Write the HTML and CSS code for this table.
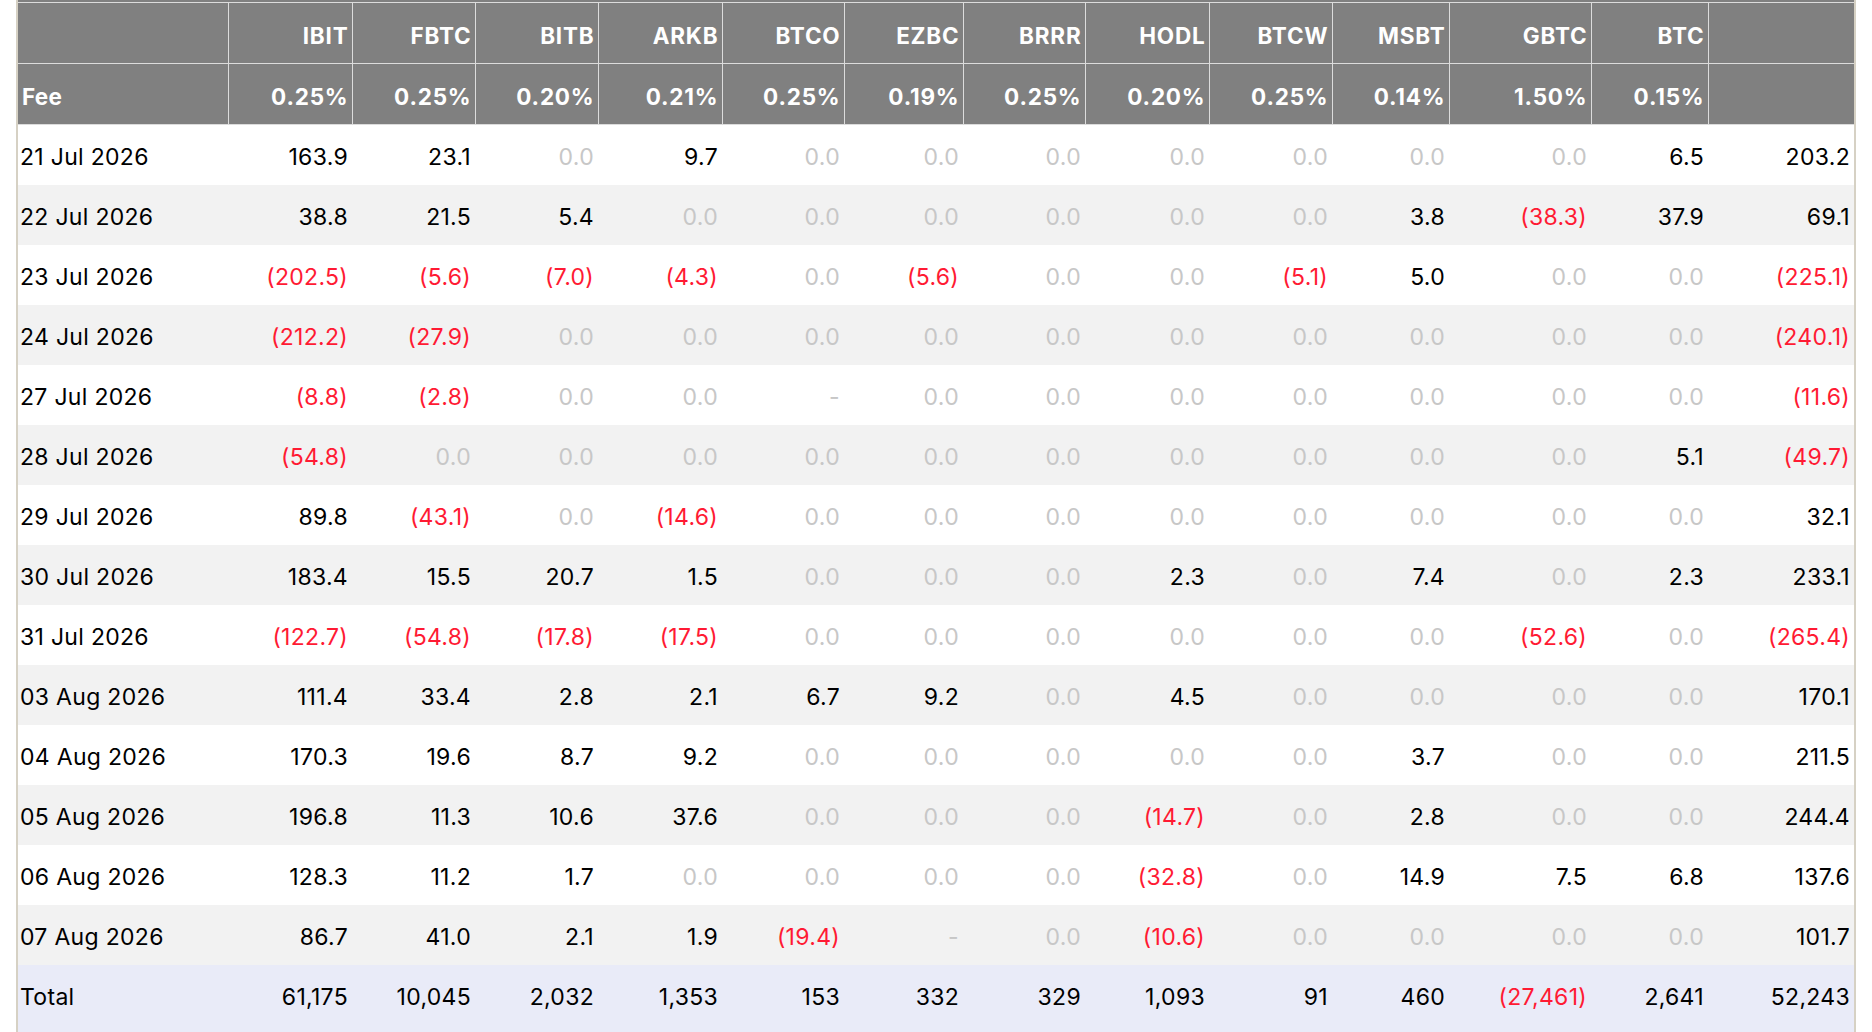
FILE: index.html
```html
<!DOCTYPE html>
<html lang="en">
<head>
<meta charset="utf-8">
<title>Bitcoin ETF Flows</title>
<link rel="stylesheet" href="styles.css">
</head>
<body>
<div class="frame">
  <div class="strip"></div>
  <table class="flows">
    <colgroup>
      <col class="c-date"><col class="c-ibit"><col class="c-fbtc"><col class="c-bitb"><col class="c-arkb"><col class="c-btco"><col class="c-ezbc"><col class="c-brrr"><col class="c-hodl"><col class="c-btcw"><col class="c-msbt"><col class="c-gbtc"><col class="c-btc"><col class="c-total">
    </colgroup>
    <thead>
      <tr>
        <th class="lbl"></th><th>IBIT</th><th>FBTC</th><th>BITB</th><th>ARKB</th><th>BTCO</th><th>EZBC</th><th>BRRR</th><th>HODL</th><th>BTCW</th><th>MSBT</th><th>GBTC</th><th>BTC</th><th class="last"></th>
      </tr>
      <tr>
        <th class="lbl">Fee</th><th>0.25%</th><th>0.25%</th><th>0.20%</th><th>0.21%</th><th>0.25%</th><th>0.19%</th><th>0.25%</th><th>0.20%</th><th>0.25%</th><th>0.14%</th><th>1.50%</th><th>0.15%</th><th class="last"></th>
      </tr>
    </thead>
    <tbody>
      <tr><td class="d">21 Jul 2026</td><td>163.9</td><td>23.1</td><td class="z">0.0</td><td>9.7</td><td class="z">0.0</td><td class="z">0.0</td><td class="z">0.0</td><td class="z">0.0</td><td class="z">0.0</td><td class="z">0.0</td><td class="z">0.0</td><td>6.5</td><td>203.2</td></tr>
      <tr><td class="d">22 Jul 2026</td><td>38.8</td><td>21.5</td><td>5.4</td><td class="z">0.0</td><td class="z">0.0</td><td class="z">0.0</td><td class="z">0.0</td><td class="z">0.0</td><td class="z">0.0</td><td>3.8</td><td class="n">(38.3)</td><td>37.9</td><td>69.1</td></tr>
      <tr><td class="d">23 Jul 2026</td><td class="n">(202.5)</td><td class="n">(5.6)</td><td class="n">(7.0)</td><td class="n">(4.3)</td><td class="z">0.0</td><td class="n">(5.6)</td><td class="z">0.0</td><td class="z">0.0</td><td class="n">(5.1)</td><td>5.0</td><td class="z">0.0</td><td class="z">0.0</td><td class="n">(225.1)</td></tr>
      <tr><td class="d">24 Jul 2026</td><td class="n">(212.2)</td><td class="n">(27.9)</td><td class="z">0.0</td><td class="z">0.0</td><td class="z">0.0</td><td class="z">0.0</td><td class="z">0.0</td><td class="z">0.0</td><td class="z">0.0</td><td class="z">0.0</td><td class="z">0.0</td><td class="z">0.0</td><td class="n">(240.1)</td></tr>
      <tr><td class="d">27 Jul 2026</td><td class="n">(8.8)</td><td class="n">(2.8)</td><td class="z">0.0</td><td class="z">0.0</td><td class="z">-</td><td class="z">0.0</td><td class="z">0.0</td><td class="z">0.0</td><td class="z">0.0</td><td class="z">0.0</td><td class="z">0.0</td><td class="z">0.0</td><td class="n">(11.6)</td></tr>
      <tr><td class="d">28 Jul 2026</td><td class="n">(54.8)</td><td class="z">0.0</td><td class="z">0.0</td><td class="z">0.0</td><td class="z">0.0</td><td class="z">0.0</td><td class="z">0.0</td><td class="z">0.0</td><td class="z">0.0</td><td class="z">0.0</td><td class="z">0.0</td><td>5.1</td><td class="n">(49.7)</td></tr>
      <tr><td class="d">29 Jul 2026</td><td>89.8</td><td class="n">(43.1)</td><td class="z">0.0</td><td class="n">(14.6)</td><td class="z">0.0</td><td class="z">0.0</td><td class="z">0.0</td><td class="z">0.0</td><td class="z">0.0</td><td class="z">0.0</td><td class="z">0.0</td><td class="z">0.0</td><td>32.1</td></tr>
      <tr><td class="d">30 Jul 2026</td><td>183.4</td><td>15.5</td><td>20.7</td><td>1.5</td><td class="z">0.0</td><td class="z">0.0</td><td class="z">0.0</td><td>2.3</td><td class="z">0.0</td><td>7.4</td><td class="z">0.0</td><td>2.3</td><td>233.1</td></tr>
      <tr><td class="d">31 Jul 2026</td><td class="n">(122.7)</td><td class="n">(54.8)</td><td class="n">(17.8)</td><td class="n">(17.5)</td><td class="z">0.0</td><td class="z">0.0</td><td class="z">0.0</td><td class="z">0.0</td><td class="z">0.0</td><td class="z">0.0</td><td class="n">(52.6)</td><td class="z">0.0</td><td class="n">(265.4)</td></tr>
      <tr><td class="d">03 Aug 2026</td><td>111.4</td><td>33.4</td><td>2.8</td><td>2.1</td><td>6.7</td><td>9.2</td><td class="z">0.0</td><td>4.5</td><td class="z">0.0</td><td class="z">0.0</td><td class="z">0.0</td><td class="z">0.0</td><td>170.1</td></tr>
      <tr><td class="d">04 Aug 2026</td><td>170.3</td><td>19.6</td><td>8.7</td><td>9.2</td><td class="z">0.0</td><td class="z">0.0</td><td class="z">0.0</td><td class="z">0.0</td><td class="z">0.0</td><td>3.7</td><td class="z">0.0</td><td class="z">0.0</td><td>211.5</td></tr>
      <tr><td class="d">05 Aug 2026</td><td>196.8</td><td>11.3</td><td>10.6</td><td>37.6</td><td class="z">0.0</td><td class="z">0.0</td><td class="z">0.0</td><td class="n">(14.7)</td><td class="z">0.0</td><td>2.8</td><td class="z">0.0</td><td class="z">0.0</td><td>244.4</td></tr>
      <tr><td class="d">06 Aug 2026</td><td>128.3</td><td>11.2</td><td>1.7</td><td class="z">0.0</td><td class="z">0.0</td><td class="z">0.0</td><td class="z">0.0</td><td class="n">(32.8)</td><td class="z">0.0</td><td>14.9</td><td>7.5</td><td>6.8</td><td>137.6</td></tr>
      <tr><td class="d">07 Aug 2026</td><td>86.7</td><td>41.0</td><td>2.1</td><td>1.9</td><td class="n">(19.4)</td><td class="z">-</td><td class="z">0.0</td><td class="n">(10.6)</td><td class="z">0.0</td><td class="z">0.0</td><td class="z">0.0</td><td class="z">0.0</td><td>101.7</td></tr>
    </tbody>
    <tfoot>
      <tr><td class="d">Total</td><td>61,175</td><td>10,045</td><td>2,032</td><td>1,353</td><td>153</td><td>332</td><td>329</td><td>1,093</td><td>91</td><td>460</td><td class="n">(27,461)</td><td>2,641</td><td>52,243</td></tr>
    </tfoot>
  </table>
</div>
</body>
</html>
```

FILE: styles.css
```css
html, body {
  margin: 0;
  padding: 0;
  background: #ffffff;
}

body {
  font-family: Inter, "Noto Sans", "Liberation Sans", sans-serif;
  color: #000000;
}

.frame {
  margin: 0 16px;
  border-left: 2px solid #d6d1c4;
  border-right: 2px solid #d6d1c4;
}

.strip {
  height: 2px;
  background: #808080;
}

.flows {
  width: 100%;
  table-layout: fixed;
  border-collapse: collapse;
  font-size: 23px;
}

.c-date { width: 210px; }
.c-ibit { width: 124px; }
.c-fbtc { width: 123px; }
.c-bitb { width: 123px; }
.c-arkb { width: 124px; }
.c-btco { width: 122px; }
.c-ezbc { width: 119px; }
.c-brrr { width: 122px; }
.c-hodl { width: 124px; }
.c-btcw { width: 123px; }
.c-msbt { width: 117px; }
.c-gbtc { width: 142px; }
.c-btc { width: 117px; }
.c-total { width: 146px; }

.flows th {
  background: #808080;
  color: #ffffff;
  font-size: 22.5px;
  font-weight: 700;
  letter-spacing: 0.8px;
  text-align: right;
  height: 56px;
  padding: 4px 3px 0 0;
  border-top: 1px solid #dcdcdc;
  border-bottom: 1px solid #dcdcdc;
  border-right: 1px solid #dcdcdc;
  white-space: nowrap;
}

.flows th.lbl {
  text-align: left;
  padding-left: 4px;
  letter-spacing: 0.3px;
}

.flows th.last {
  border-right: none;
}

.flows td {
  height: 56px;
  padding: 4px 4px 0 0;
  text-align: right;
  white-space: nowrap;
  letter-spacing: 0.3px;
}

.flows td.d {
  text-align: left;
  padding-left: 2px;
}

.flows tbody tr:nth-child(odd) td {
  background: #ffffff;
}

.flows tbody tr:nth-child(even) td {
  background: #f2f2f2;
}

.flows tfoot td {
  background: #e9ebf8;
  height: 64px;
  padding-bottom: 6px;
  padding-top: 0;
}

.flows td.z {
  color: #c7c7c7;
}

.flows td.n {
  color: #ff1a33;
}
```
